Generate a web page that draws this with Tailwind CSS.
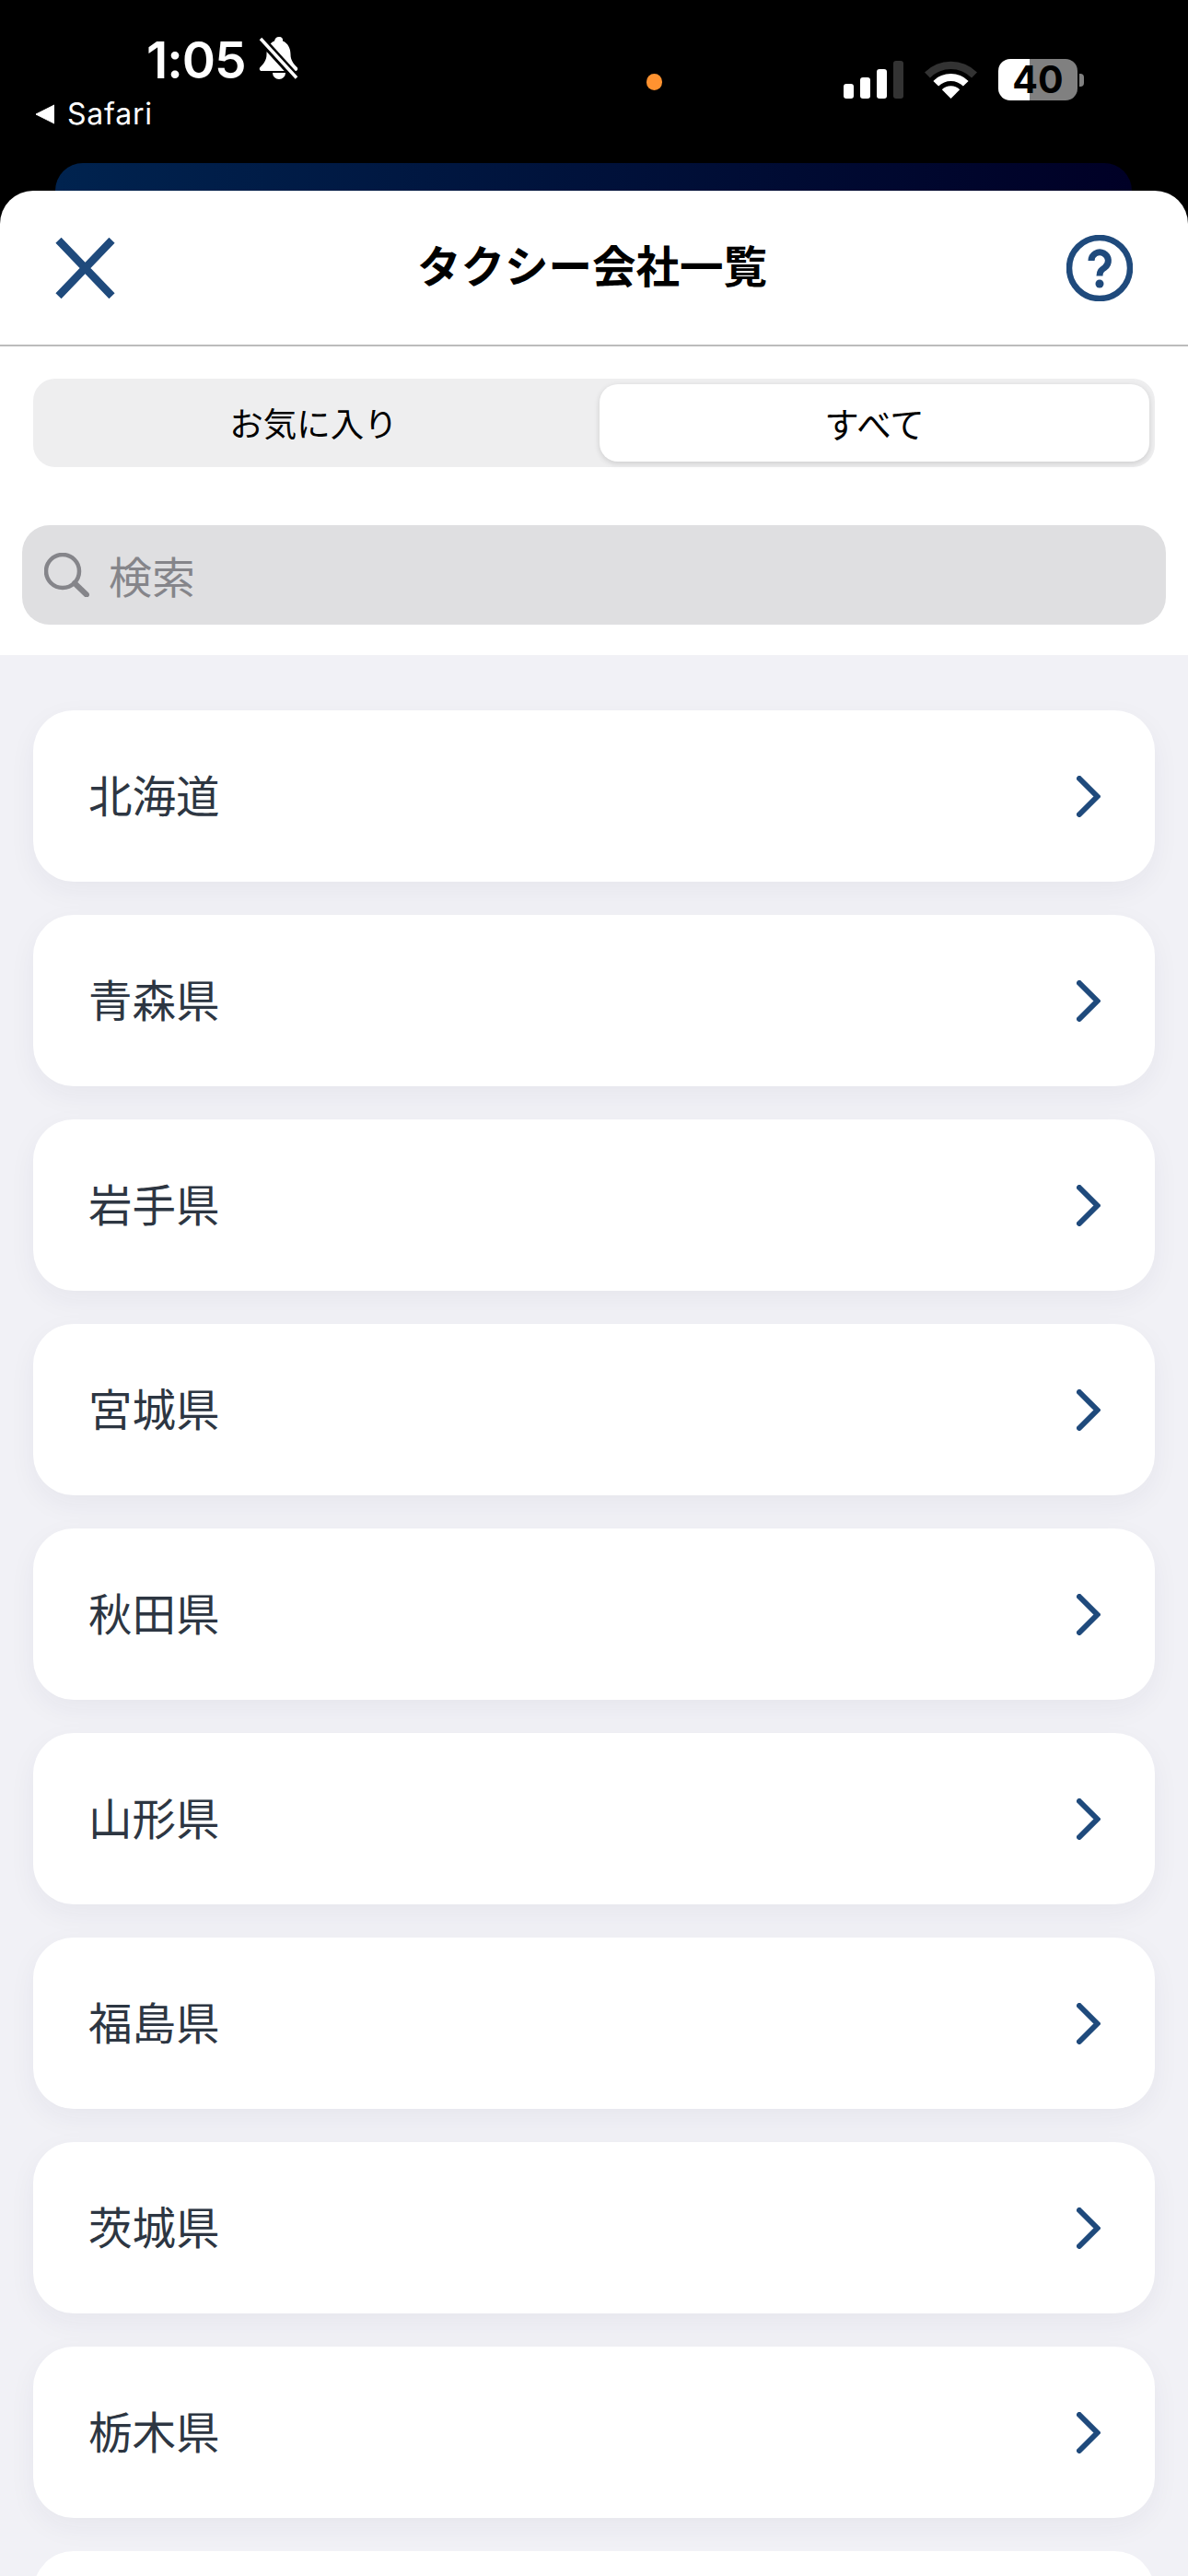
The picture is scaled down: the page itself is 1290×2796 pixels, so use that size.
<!DOCTYPE html>
<html lang="ja">
<head>
  <meta charset="UTF-8">
  <meta name="viewport" content="width=device-width, initial-scale=1.0">
  <title>タクシー会社一覧</title>
  <script src="https://cdn.jsdelivr.net/npm/@tailwindcss/browser@4"></script>
  <script>
    const prefectures = ['北海道', '青森県', '岩手県', '宮城県', '秋田県', '山形県', '福島県', '茨城県', '栃木県'];

    window.addEventListener('DOMContentLoaded', () => {
      const list = document.getElementById('prefList');
      prefectures.forEach(name => {
        const row = document.createElement('div');
        row.className = 'flex items-center justify-between h-[186px] shrink-0 pl-[60px] pr-[59px] bg-white rounded-[44px] shadow-[0_10px_30px_rgba(30,30,70,0.05)]';
        row.innerHTML = `
          <span class="text-[47.5px] leading-[60px] pb-[5px] text-[#2d3642]">${name}</span>
          <svg class="w-[26px] h-[45px]" viewBox="0 0 26 45" fill="none" stroke="#1f4a7c" stroke-width="6" stroke-linecap="round" stroke-linejoin="miter"><path d="M3 3 L22.5 22.5 L3 42"/></svg>
        `;
        list.appendChild(row);
      });
      // next row, cut off by the bottom of the screen
      const last = document.createElement('div');
      last.className = 'h-[186px] shrink-0 bg-white rounded-[44px]';
      list.appendChild(last);
    });
  </script>
</head>
<body class="bg-black">
  <div class="w-[1290px] h-[2796px] overflow-hidden flex flex-col font-['Noto_Sans_CJK_JP',sans-serif]">

    <!-- status bar -->
    <div class="h-[177px] shrink-0 flex text-white">
      <div class="w-[702px] shrink-0 pt-[31px] pl-[38px]">
        <div class="flex items-center h-[68px] pl-[121px] gap-[14px]">
          <span class="font-['Inter',sans-serif] font-semibold text-[55px] leading-[68px] tracking-[-1px]">1:05</span>
          <svg class="w-[43px] h-[46px] mt-[-4px]" viewBox="0 0 43 46" fill="#fff">
            <path d="M22 0C19 0 17.5 2 17 4.5 11 7 8.500 13 8.500 19c0 6-3 10-7 14-1.500 1.500-.5 4 1.500 4h37c2 0 3-2.500 1.500-4-4-4-7-8-7-14 0-6-2.500-12-8.500-14.500C26.500 2 25 0 22 0Z"/>
            <path d="M15 39a7 7 0 0 0 14 0Z"/>
            <path d="M0 0 L42 46" stroke="#000" stroke-width="9"/>
            <path d="M2 2 L41 44.500" stroke="#fff" stroke-width="3.500"/>
          </svg>
        </div>
        <div class="flex items-center gap-[14px] h-[36px] mt-[7px]">
          <svg class="w-[21px] h-[22px]" viewBox="0 0 21 22" fill="#fff"><path d="M21 1 L21 21 L1 11 Z" stroke="#fff" stroke-linejoin="round"/></svg>
          <span class="font-['Inter',sans-serif] text-[32px] leading-[36px] tracking-[0.8px]">Safari</span>
        </div>
      </div>
      <div class="w-[17px] h-[18px] mt-[80px] rounded-full bg-[#ff9230]"></div>
      <div class="flex items-start ml-[197px] pt-[64px]">
        <div class="flex items-end gap-[7px] h-[43px]">
          <div class="w-[11px] h-[16px] rounded-[3px] bg-white"></div>
          <div class="w-[11px] h-[23px] rounded-[3px] bg-white"></div>
          <div class="w-[11px] h-[32px] rounded-[3px] bg-white"></div>
          <div class="w-[11px] h-[41px] rounded-[3px] bg-[#333333]"></div>
        </div>
        <svg class="w-[57px] h-[42px] ml-[23px] mt-[1px]" viewBox="0 0 57 42" fill="#fff">
          <path fill="#333333" d="M0 13.5A40.3 40.3 0 0 1 57 13.5L51.1 19.4A32 32 0 0 0 5.9 19.4Z"/>
          <path d="M9.4 22.9A27 27 0 0 1 47.6 22.9L41.9 28.6A19 19 0 0 0 15.1 28.6Z"/>
          <path d="M18.8 32.3A13.7 13.7 0 0 1 38.2 32.3L28.5 42Z"/>
        </svg>
        <div class="flex items-center ml-[23px]">
          <div class="flex items-center justify-center w-[86px] h-[45px] rounded-[13px] bg-[linear-gradient(90deg,#ffffff_34px,#808080_34px)] font-['Inter',sans-serif] font-bold text-[41px] leading-[45px] text-black">40</div>
          <div class="w-[5px] h-[14px] ml-[2px] rounded-r-[4px] bg-[#808080]"></div>
        </div>
      </div>
    </div>

    <!-- card peeking out behind the sheet -->
    <div class="h-[30px] shrink-0 mx-[60px] w-[1169px] rounded-t-[30px] bg-[linear-gradient(90deg,#00234f,#000026)]"></div>

    <!-- sheet -->
    <div class="flex-1 min-h-0 flex flex-col rounded-t-[36px] bg-white overflow-hidden">
      <header class="h-[169px] shrink-0 flex items-center justify-between pl-[60px] pr-[60px] border-b-2 border-[#bcbcbc]">
        <svg class="w-[65px] h-[66px]" viewBox="0 0 65 66" fill="none" stroke="#1f4a7c" stroke-width="8.500"><path d="M3.5 2.7 L61.5 63.3 M61.5 2.7 L3.5 63.3"/></svg>
        <h1 class="text-[47.500px] leading-[60px] pb-[8px] pl-[3px] font-bold text-black">タクシー会社一覧</h1>
        <svg class="w-[72px] h-[72px]" viewBox="0 0 72 72" fill="none" stroke="#1f4a7c" stroke-width="6.500">
          <circle cx="36" cy="36" r="33"/>
          <path d="M27 28a9.2 9.2 0 1 1 14.500 7.500c-3.500 2.500-5.500 4-5.500 9" stroke-width="7"/>
          <circle cx="36" cy="53" r="4.500" fill="#1f4a7c" stroke="none"/>
        </svg>
      </header>

      <div class="shrink-0 h-[335px] pt-[35px]">
        <div class="mx-[36px] h-[96px] flex p-[6px] rounded-[24px] bg-[#eeeeef]">
          <button class="w-[609px] pr-[12px] text-[36.500px] leading-[84px] text-black">お気に入り</button>
          <button class="flex-1 rounded-[20px] bg-white text-[37.500px] leading-[84px] text-black shadow-[0_2px_6px_rgba(0,0,0,0.14)]">すべて</button>
        </div>
        <div class="mx-[24px] mt-[63px] h-[108px] flex items-center pl-[24px] gap-[21px] rounded-[30px] bg-[#dfdfe1]">
          <svg class="w-[49px] h-[48px]" viewBox="0 0 49 48" fill="none" stroke="#85858a"><circle cx="20" cy="20" r="18" stroke-width="4.5"/><path d="M33 33 L46 45.5" stroke-width="6" stroke-linecap="round"/></svg>
          <span class="text-[47px] leading-[60px] text-[#85858a]">検索</span>
        </div>
      </div>

      <div id="prefList" class="flex-1 flex flex-col gap-[36px] px-[36px] pt-[60px] bg-[#f1f1f6]"></div>
    </div>
  </div>
</body>
</html>
